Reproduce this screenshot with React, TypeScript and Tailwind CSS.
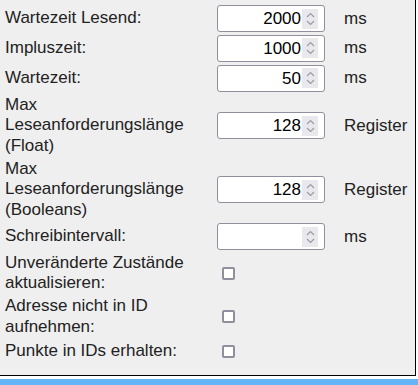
import React from "react"

type Row = {
    label: string[]
    h: string
    value?: string
    unit?: string
    kind: "number" | "check"
}

const rows: Row[] = [
    { label: ["Wartezeit Lesend:"], h: "h-[29px]", value: "2000", unit: "ms", kind: "number" },
    { label: ["Impluszeit:"], h: "h-[30px]", value: "1000", unit: "ms", kind: "number" },
    { label: ["Wartezeit:"], h: "h-[30px]", value: "50", unit: "ms", kind: "number" },
    { label: ["Max", "Leseanforderungslänge", "(Float)"], h: "h-[65px]", value: "128", unit: "Register", kind: "number" },
    { label: ["Max", "Leseanforderungslänge", "(Booleans)"], h: "h-[63px]", value: "128", unit: "Register", kind: "number" },
    { label: ["Schreibintervall:"], h: "h-[31px]", value: "", unit: "ms", kind: "number" },
    { label: ["Unveränderte Zustände", "aktualisieren:"], h: "h-[42px]", kind: "check" },
    { label: ["Adresse nicht in ID", "aufnehmen:"], h: "h-[45px]", kind: "check" },
    { label: ["Punkte in IDs erhalten:"], h: "h-[25px]", kind: "check" },
]

function NumberBox({ value }: { value: string }) {
    return (
        <div className="flex h-[27px] w-[108px] items-center justify-end rounded-[3px] border border-[#8f8f9d] bg-white pr-[6px]">
            <span className="text-[17px] leading-none text-black">{value}</span>
            {/* spin buttons */}
            <div className="ml-[1px] flex h-[20px] w-[16px] flex-col items-center justify-center gap-[2px] bg-[#e9e9ed]">
                <svg width="9" height="6" viewBox="0 0 9 6" fill="none" stroke="#9a9aa6" strokeWidth="1.2">
                    <path d="M1 5 L4.5 1.5 L8 5" />
                </svg>
                <svg width="9" height="6" viewBox="0 0 9 6" fill="none" stroke="#9a9aa6" strokeWidth="1.2">
                    <path d="M1 1 L4.5 4.5 L8 1" />
                </svg>
            </div>
        </div>
    )
}

export default function App() {
    return (
        <div className="h-[385px] w-[418px] overflow-hidden bg-white font-['Liberation_Sans',Arial,sans-serif] text-[17px] text-[#222]">
            <div className="h-[376px] w-[416px] border-r border-b border-black bg-[#efefef] pl-[5px] pt-[4px]">
                {rows.map((r, i) => (
                    <div key={i} className={`grid grid-cols-[207px_127px_1fr] items-center ${r.h}`}>
                        <div className="leading-[20.5px]">
                            {r.label.map((l, j) => (
                                <div key={j}>{l}</div>
                            ))}
                        </div>
                        <div className="pl-[5px]">
                            {r.kind === "number" ? (
                                <NumberBox value={r.value ?? ""} />
                            ) : (
                                <div className="ml-[5px] h-[13px] w-[13px] rounded-[2px] border-2 border-[#8f8f9d] bg-white" />
                            )}
                        </div>
                        <div className="pl-[5px] leading-[20px]">{r.unit}</div>
                    </div>
                ))}
            </div>
            <div className="mt-[3px] h-[6px] w-full bg-[#64b5f6]" />
        </div>
    )
}
